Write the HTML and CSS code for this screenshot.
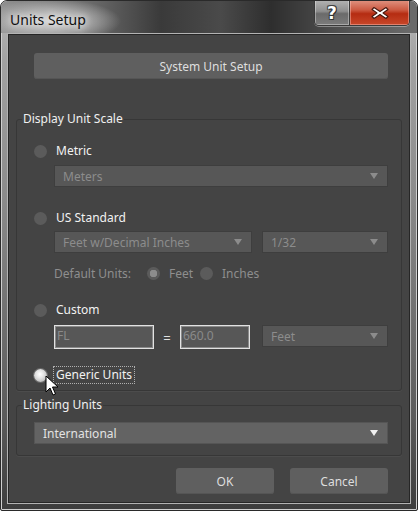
FILE: index.html
```html
<!DOCTYPE html>
<html>
<head>
<meta charset="utf-8">
<link rel="stylesheet" href="styles.css">
</head>
<body>
<div class="window">
  <div class="titlebar">
    <div class="title">Units Setup</div>
    <div class="caption-btns">
      <div class="cbtn help"><span class="glyph">?</span></div>
      <div class="cbtn close">
        <svg width="22" height="14" viewBox="0 0 22 14"><path d="M5 1.5 L11 5.5 L17 1.5 L19 3.5 L14 7 L19 10.5 L17 12.5 L11 8.5 L5 12.5 L3 10.5 L8 7 L3 3.5 Z" fill="#fff" stroke="#4a1a10" stroke-width="1.1" stroke-linejoin="round"/></svg>
      </div>
    </div>
  </div>
  <div class="client">
    <div class="btn wide">System Unit Setup</div>

    <fieldset class="group scale">
      <legend>Display Unit Scale</legend>

      <div class="radio-row r-metric"><span class="radio"></span><span class="label">Metric</span></div>
      <div class="dropdown dis indent d-meters"><span>Meters</span><span class="arrow"></span></div>

      <div class="radio-row r-us"><span class="radio"></span><span class="label">US Standard</span></div>
      <div class="dd-row indent d-us">
        <div class="dropdown dis d-feetdec"><span>Feet w/Decimal Inches</span><span class="arrow"></span></div>
        <div class="dropdown dis d-frac"><span>1/32</span><span class="arrow"></span></div>
      </div>

      <div class="default-row indent">
        <span class="dim">Default Units:</span>
        <span class="radio small-sel"></span><span class="dim">Feet</span>
        <span class="radio r-inches"></span><span class="dim">Inches</span>
      </div>

      <div class="radio-row r-custom"><span class="radio"></span><span class="label">Custom</span></div>
      <div class="custom-row indent">
        <div class="input i-fl">FL</div>
        <span class="eq">=</span>
        <div class="input i-val">660.0</div>
        <div class="dropdown dis d-cfeet"><span>Feet</span><span class="arrow"></span></div>
      </div>

      <div class="radio-row r-generic"><span class="radio sel"></span><span class="label focus">Generic Units</span></div>
    </fieldset>

    <fieldset class="group lighting">
      <legend>Lighting Units</legend>
      <div class="dropdown en d-intl"><span>International</span><span class="arrow"></span></div>
    </fieldset>

    <div class="actions">
      <div class="btn act">OK</div>
      <div class="btn act">Cancel</div>
    </div>
  </div>
  <svg class="cursor" width="14" height="22" viewBox="0 0 14 22"><path d="M1 1 L1 17 L5 13 L8 20 L10.5 19 L7.5 12 L13 12 Z" fill="#fff" stroke="#000" stroke-width="1" stroke-linejoin="miter"/></svg>
</div>
</body>
</html>
```
FILE: styles.css
```css
* { box-sizing: border-box; }
html, body { margin: 0; padding: 0; }
body {
  width: 418px; height: 511px; overflow: hidden;
  background: #fff;
  font-family: "Noto Sans", "Open Sans", sans-serif;
  font-size: 12px;
}
.window {
  position: relative;
  width: 418px; height: 511px;
  border-radius: 7px 7px 2px 2px;
  border: 1px solid #2a2a2a;
  background:
    linear-gradient(180deg, #b9b9b9 0px, #a2a2a2 60px, #8a8a8a 200px, #5a5a5a 420px, #3c3c3c 511px);
  overflow: hidden;
  box-shadow: inset 0 0 0 1px #cfcfcf;
}
.titlebar {
  height: 32px;
  display: flex;
  align-items: flex-start;
  background:
    radial-gradient(ellipse 70px 22px at 50px 20px, rgba(215,215,215,0.95) 0, rgba(200,200,200,0.6) 55%, rgba(200,200,200,0) 100%),
    linear-gradient(90deg, #909090 0px, #6a6a6a 90px, #3a3a3a 160px, #4a4a4a 220px, #2e2e2e 270px, #4c4c4c 330px, #6a6a6a 410px);
  border-radius: 6px 6px 0 0;
}
.title {
  padding: 9px 0 0 9px;
  font-size: 14px;
  color: #101010;
  text-shadow: 0 0 6px rgba(255,255,255,0.9), 0 0 10px rgba(255,255,255,0.7);
}
.caption-btns {
  margin-left: auto;
  margin-right: 7px;
  margin-top: -1px;
  display: flex;
  border: 1px solid #3a3a3a;
  border-top: none;
  border-radius: 0 0 5px 5px;
  overflow: hidden;
  box-shadow: 0 1px 0 rgba(255,255,255,0.35);
}
.cbtn {
  height: 25px;
  display: flex; align-items: center; justify-content: center;
}
.help {
  width: 35px;
  background: linear-gradient(180deg, #b4b4b4 0, #8e8e8e 45%, #6a6a6a 55%, #7c7c7c 100%);
  border-right: 1px solid #3a3a3a;
  box-shadow: inset 0 0 0 1px rgba(255,255,255,0.35);
}
.help .glyph {
  font-family: "DejaVu Sans", sans-serif;
  font-weight: bold;
  font-size: 17px;
  color: #fff;
  text-shadow: 0 0 1px #222, 1px 1px 0 #333, -1px -1px 0 #444, 1px -1px 0 #444, -1px 1px 0 #444;
  line-height: 1;
  margin-top: 1px;
}
.close {
  width: 59px;
  background: linear-gradient(180deg, #e09482 0, #cc5a42 40%, #b52c12 55%, #c8482a 100%);
  box-shadow: inset 0 0 0 1px rgba(255,200,190,0.45);
}
.client {
  margin: 0 0 0 6px;
  width: 404px;
  height: 471px;
  background: #444444;
  border: 1px solid #b3b3b3;
  box-shadow: inset 0 0 0 1px #262626;
  padding: 0 8px;
  display: flex;
  flex-direction: column;
}
.btn {
  background: #5f5f5f;
  border-radius: 3px;
  color: #dedede;
  display: flex; align-items: center; justify-content: center;
  height: 26px;
  box-shadow: inset 0 -1px 0 #555;
}
.btn.wide {
  margin: 19px 14px 0 18px;
}
.group {
  margin: 0;
  border: 1px solid #373737;
  border-radius: 3px;
  padding: 0 13px 0 17px;
  min-width: 0;
  box-shadow: 0 1px 0 #4c4c4c;
}
.group legend {
  padding: 0 1px;
  margin-left: -12px;
  color: #f0f0f0;
  line-height: 16px;
}
.group.scale {
  margin-top: 32px;
  padding-bottom: 6px;
}
.group.lighting {
  margin-top: 6px;
  padding-bottom: 11px;
}
.radio-row {
  display: flex; align-items: center;
  height: 18px;
}
.radio {
  width: 13px; height: 13px;
  border-radius: 50%;
  background: #5b5b5b;
  flex: none;
  margin-right: 6px;
}
.radio.sel {
  background: radial-gradient(circle at 45% 40%, #ffffff 0, #e6e6e6 35%, #b9b9b9 80%, #9a9a9a 100%);
  box-shadow: 0 0 0 1px #6a6a6a;
}
.label {
  color: #f2f2f2;
  border: 1px dotted transparent;
  padding: 0 2px;
  line-height: 16px;
}
.label.focus { border-color: #b0b0b0; }
.r-metric { margin-top: 15px; }
.r-us { margin-top: 22px; }
.r-custom { margin-top: 19px; }
.r-generic { margin-top: 15px; }
.indent { margin-left: 20px; }
.dropdown {
  height: 22px;
  display: flex; align-items: center;
  justify-content: space-between;
  padding: 0 9px 0 8px;
  border: 1px solid #3e3e3e;
}
.dropdown.dis { background: #575757; color: #8c8c8c; }
.dropdown.en { background: #636363; color: #e2e2e2; border-color: #555; }
.arrow {
  width: 0; height: 0;
  border-left: 4.5px solid transparent;
  border-right: 4.5px solid transparent;
  border-top: 6px solid #8c8c8c;
}
.dropdown.en .arrow { border-top-color: #f0f0f0; }
.d-meters { margin-top: 5px; }
.dd-row { display: flex; gap: 10px; margin-top: 4px; }
.d-feetdec { width: 198px; }
.d-frac { flex: 1; }
.default-row {
  display: flex; align-items: center;
  height: 18px;
  margin-top: 11px;
}
.dim { color: #8e8e8e; }
.default-row .radio { margin-right: 9px; }
.small-sel {
  margin-left: 16px;
  background: radial-gradient(circle, #8c8c8c 0, #8c8c8c 3.5px, #5b5b5b 4px);
}
.r-inches { margin-left: 7px; }
.custom-row {
  display: flex; align-items: flex-start;
  margin-top: 6px;
}
.input {
  height: 24px;
  background: #575757;
  border: 1px solid #e2e2e2;
  box-shadow: inset 0 0 0 1px #8a8a8a;
  color: #8a8a8a;
  padding: 2px 0 0 2px;
  line-height: 16px;
}
.i-fl { width: 100px; }
.eq { color: #e0e0e0; width: 26px; text-align: center; line-height: 26px; font-size: 13px; }
.i-val { width: 70px; }
.d-cfeet { flex: 1; margin-left: 12px; }
.d-intl { margin-top: 9px; }
.actions {
  display: flex; justify-content: flex-end;
  gap: 16px;
  margin-top: 12px;
  padding-right: 14px;
}
.btn.act { width: 98px; }
.cursor {
  position: absolute;
  left: 44px; top: 374px;
}
```
